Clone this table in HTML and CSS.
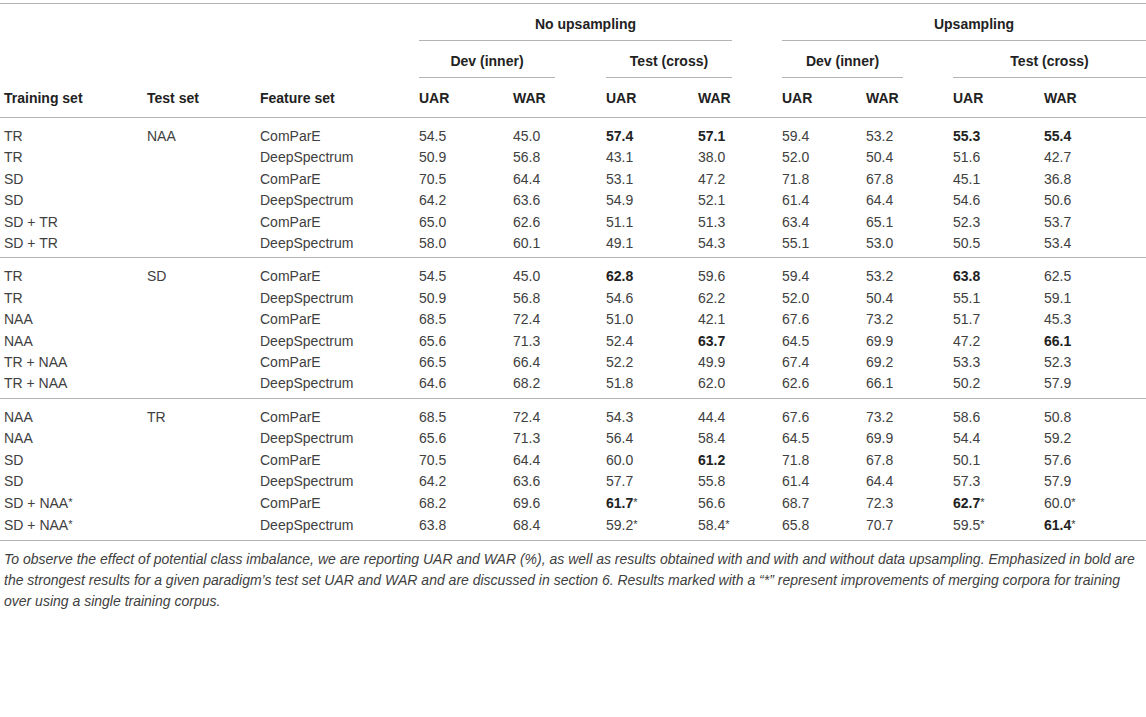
FILE: index.html
```html
<!DOCTYPE html>
<html>
<head>
<meta charset="utf-8">
<link rel="stylesheet" href="styles.css">
</head>
<body>
<div class="page">
<table class="results">
<colgroup>
<col class="c1"><col class="c2"><col class="c3"><col class="c4"><col class="c5"><col class="c6"><col class="c7"><col class="c8"><col class="c9"><col class="c10"><col class="c11">
</colgroup>
<thead>
<tr class="h1">
<th rowspan="3" class="rs">Training set</th>
<th rowspan="3" class="rs">Test set</th>
<th rowspan="3" class="rs">Feature set</th>
<th colspan="4" class="grp pr46"><div class="ul big">No upsampling</div></th>
<th colspan="4" class="grp pr0"><div class="ul big">Upsampling</div></th>
</tr>
<tr class="h2">
<th colspan="2" class="grp pr47"><div class="ul">Dev (inner)</div></th>
<th colspan="2" class="grp pr46"><div class="ul">Test (cross)</div></th>
<th colspan="2" class="grp pr46"><div class="ul">Dev (inner)</div></th>
<th colspan="2" class="grp pr0"><div class="ul">Test (cross)</div></th>
</tr>
<tr class="h3">
<th>UAR</th><th>WAR</th><th>UAR</th><th>WAR</th><th>UAR</th><th>WAR</th><th>UAR</th><th>WAR</th>
</tr>
</thead>
<tbody>
<tr><td>TR</td><td>NAA</td><td>ComParE</td><td>54.5</td><td>45.0</td><td><b>57.4</b></td><td><b>57.1</b></td><td>59.4</td><td>53.2</td><td><b>55.3</b></td><td><b>55.4</b></td></tr>
<tr><td>TR</td><td></td><td>DeepSpectrum</td><td>50.9</td><td>56.8</td><td>43.1</td><td>38.0</td><td>52.0</td><td>50.4</td><td>51.6</td><td>42.7</td></tr>
<tr><td>SD</td><td></td><td>ComParE</td><td>70.5</td><td>64.4</td><td>53.1</td><td>47.2</td><td>71.8</td><td>67.8</td><td>45.1</td><td>36.8</td></tr>
<tr><td>SD</td><td></td><td>DeepSpectrum</td><td>64.2</td><td>63.6</td><td>54.9</td><td>52.1</td><td>61.4</td><td>64.4</td><td>54.6</td><td>50.6</td></tr>
<tr><td>SD + TR</td><td></td><td>ComParE</td><td>65.0</td><td>62.6</td><td>51.1</td><td>51.3</td><td>63.4</td><td>65.1</td><td>52.3</td><td>53.7</td></tr>
<tr><td>SD + TR</td><td></td><td>DeepSpectrum</td><td>58.0</td><td>60.1</td><td>49.1</td><td>54.3</td><td>55.1</td><td>53.0</td><td>50.5</td><td>53.4</td></tr>
</tbody>
<tbody>
<tr><td>TR</td><td>SD</td><td>ComParE</td><td>54.5</td><td>45.0</td><td><b>62.8</b></td><td>59.6</td><td>59.4</td><td>53.2</td><td><b>63.8</b></td><td>62.5</td></tr>
<tr><td>TR</td><td></td><td>DeepSpectrum</td><td>50.9</td><td>56.8</td><td>54.6</td><td>62.2</td><td>52.0</td><td>50.4</td><td>55.1</td><td>59.1</td></tr>
<tr><td>NAA</td><td></td><td>ComParE</td><td>68.5</td><td>72.4</td><td>51.0</td><td>42.1</td><td>67.6</td><td>73.2</td><td>51.7</td><td>45.3</td></tr>
<tr><td>NAA</td><td></td><td>DeepSpectrum</td><td>65.6</td><td>71.3</td><td>52.4</td><td><b>63.7</b></td><td>64.5</td><td>69.9</td><td>47.2</td><td><b>66.1</b></td></tr>
<tr><td>TR + NAA</td><td></td><td>ComParE</td><td>66.5</td><td>66.4</td><td>52.2</td><td>49.9</td><td>67.4</td><td>69.2</td><td>53.3</td><td>52.3</td></tr>
<tr><td>TR + NAA</td><td></td><td>DeepSpectrum</td><td>64.6</td><td>68.2</td><td>51.8</td><td>62.0</td><td>62.6</td><td>66.1</td><td>50.2</td><td>57.9</td></tr>
</tbody>
<tbody>
<tr><td>NAA</td><td>TR</td><td>ComParE</td><td>68.5</td><td>72.4</td><td>54.3</td><td>44.4</td><td>67.6</td><td>73.2</td><td>58.6</td><td>50.8</td></tr>
<tr><td>NAA</td><td></td><td>DeepSpectrum</td><td>65.6</td><td>71.3</td><td>56.4</td><td>58.4</td><td>64.5</td><td>69.9</td><td>54.4</td><td>59.2</td></tr>
<tr><td>SD</td><td></td><td>ComParE</td><td>70.5</td><td>64.4</td><td>60.0</td><td><b>61.2</b></td><td>71.8</td><td>67.8</td><td>50.1</td><td>57.6</td></tr>
<tr><td>SD</td><td></td><td>DeepSpectrum</td><td>64.2</td><td>63.6</td><td>57.7</td><td>55.8</td><td>61.4</td><td>64.4</td><td>57.3</td><td>57.9</td></tr>
<tr><td>SD + NAA<span class="star">*</span></td><td></td><td>ComParE</td><td>68.2</td><td>69.6</td><td><b>61.7</b><span class="star">*</span></td><td>56.6</td><td>68.7</td><td>72.3</td><td><b>62.7</b><span class="star">*</span></td><td>60.0<span class="star">*</span></td></tr>
<tr><td>SD + NAA<span class="star">*</span></td><td></td><td>DeepSpectrum</td><td>63.8</td><td>68.4</td><td>59.2<span class="star">*</span></td><td>58.4<span class="star">*</span></td><td>65.8</td><td>70.7</td><td>59.5<span class="star">*</span></td><td><b>61.4</b><span class="star">*</span></td></tr>
</tbody>
</table>
<p class="caption">To observe the effect of potential class imbalance, we are reporting UAR and WAR (%), as well as results obtained with and with and without data upsampling. Emphasized in bold are<br>the strongest results for a given paradigm’s test set UAR and WAR and are discussed in section 6. Results marked with a “*” represent improvements of merging corpora for training<br>over using a single training corpus.</p>
</div>
</body>
</html>
```
FILE: styles.css
```css
html, body {
  margin: 0;
  padding: 0;
  background: #ffffff;
}
body {
  font-family: "Liberation Sans", Arial, Helvetica, sans-serif;
  color: #404040;
}
.page {
  width: 1146px;
  padding-top: 3px;
}
.results {
  width: 1146px;
  table-layout: fixed;
  border-collapse: separate;
  border-spacing: 0;
  border-top: 1px solid #b4b4b4;
  font-size: 14px;
}
.c1 { width: 143px; }
.c2 { width: 113px; }
.c3 { width: 159px; }
.c4 { width: 94px; }
.c5 { width: 93px; }
.c6 { width: 92px; }
.c7 { width: 84px; }
.c8 { width: 84px; }
.c9 { width: 87px; }
.c10 { width: 91px; }
.c11 { width: 106px; }

th, td {
  padding: 0 0 0 4px;
  text-align: left;
  white-space: nowrap;
}
th {
  font-weight: bold;
  color: #222;
  line-height: 16px;
}
.h1 th { padding-top: 12px; }
.h2 th { padding-top: 12px; }
.h3 th { padding-top: 12px; padding-bottom: 11px; border-bottom: 1px solid #b4b4b4; }
th.rs {
  vertical-align: bottom;
  padding-bottom: 11px;
  border-bottom: 1px solid #b4b4b4;
}
th.grp { text-align: center; }
.pr46 { padding-right: 46px; }
.pr47 { padding-right: 47px; }
.pr0 { padding-right: 0; }
.ul {
  border-bottom: 1px solid #b4b4b4;
  padding-bottom: 8px;
}
.ul.big { padding-left: 20px; }

td {
  line-height: 21.4px;
  color: #404040;
}
td b { color: #222; }
tbody tr:first-child td { padding-top: 8px; }
tbody tr:last-child td { padding-bottom: 3px; border-bottom: 1px solid #b4b4b4; }
.star {
  font-size: 11px;
  font-weight: normal;
  position: relative;
  top: -2px;
}
.caption {
  margin: 8px 0 0 0;
  padding-left: 4px;
  font-style: italic;
  font-size: 14px;
  line-height: 21px;
  color: #404040;
  white-space: nowrap;
}
```
